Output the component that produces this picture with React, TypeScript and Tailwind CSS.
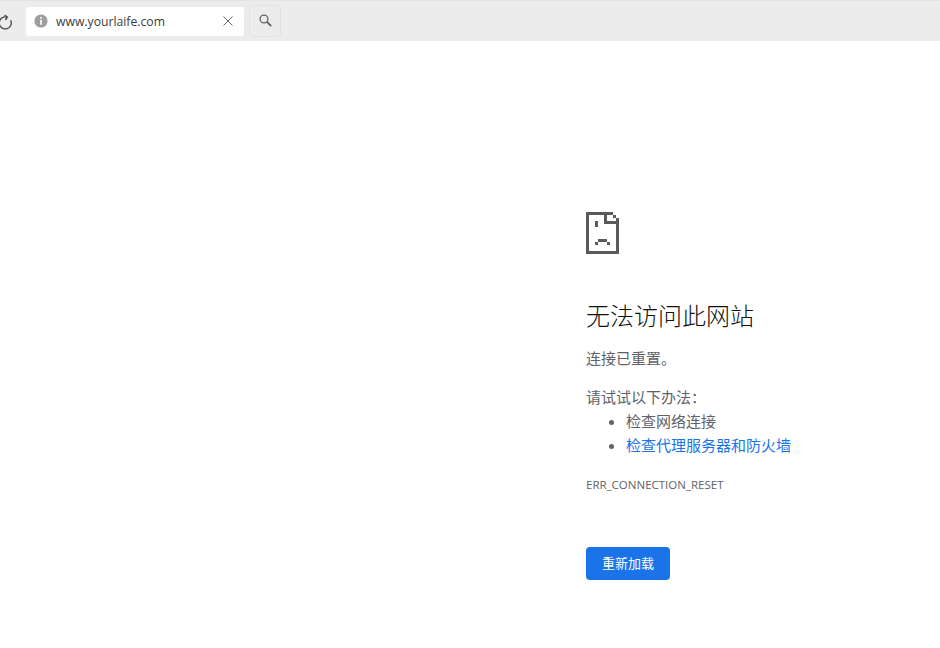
const cjk = "font-['Open_Sans','Noto_Sans_CJK_SC',sans-serif]";

function SadFile() {
  return (
    <svg width="33" height="42" viewBox="0 0 33 42" fill="#5a5a5a" shapeRendering="crispEdges">
      <rect x="0" y="0" width="3" height="42" />
      <rect x="0" y="39" width="33" height="3" />
      <rect x="30" y="6" width="3" height="36" />
      <rect x="0" y="0" width="27" height="3" />
      <rect x="27" y="3" width="3" height="3" />
      <rect x="18" y="0" width="3" height="12" />
      <rect x="18" y="9" width="15" height="3" />
      <rect x="9" y="9" width="3" height="6" />
      <rect x="9" y="30" width="3" height="3" />
      <rect x="12" y="27" width="9" height="3" />
      <rect x="21" y="30" width="3" height="3" />
    </svg>
  );
}

function ReloadIcon() {
  return (
    <svg width="16" height="16" viewBox="0 0 16 16" fill="none" stroke="#444" strokeWidth="1.3" className="ml-[-3px] mt-[2px] shrink-0">
      <path d="M13.6 6.2A6 6 0 1 1 10 3.2" />
      <path d="M7.6 1 10.4 3.2 8.4 6" />
    </svg>
  );
}

function InfoIcon() {
  return (
    <svg width="14" height="14" viewBox="0 0 14 14" className="shrink-0">
      <circle cx="7" cy="7" r="6.6" fill="#9e9e9e" />
      <rect x="6.2" y="3" width="1.6" height="1.6" fill="#fff" />
      <rect x="6.2" y="5.8" width="1.6" height="5" fill="#fff" />
    </svg>
  );
}

function CloseIcon() {
  return (
    <svg width="10" height="10" viewBox="0 0 10 10" stroke="#6a6a6a" strokeWidth="1" className="shrink-0">
      <path d="M.5.5l9 9M9.5.5l-9 9" />
    </svg>
  );
}

function SearchIcon() {
  return (
    <svg width="13" height="13" viewBox="0 0 13 13" fill="none" stroke="#636363" className="mb-[2px]">
      <circle cx="5" cy="5" r="3.9" strokeWidth="1.3" />
      <path d="M8 8l4.2 4.2" strokeWidth="1.8" />
    </svg>
  );
}

function Toolbar() {
  return (
    <div className="flex h-[41px] items-center bg-[#ececec] border-t border-[#e4e4e4]">
      <ReloadIcon />
      <div className="ml-[13px] flex h-[29px] w-[218px] items-center rounded-[3px] bg-white pl-[8px] pr-[11px]">
        <InfoIcon />
        <span className="ml-[8px] mt-[2px] flex-1 text-[12.2px] text-[#3c3c3c]">www.yourlaife.com</span>
        <CloseIcon />
      </div>
      <button className="ml-[5px] flex h-[32px] w-[32px] items-center justify-center rounded-[4px] border border-[#e2e2e2] bg-[#ececec]">
        <SearchIcon />
      </button>
    </div>
  );
}

export default function App() {
  return (
    <div className={`h-[648px] w-[940px] overflow-hidden bg-white ${cjk}`}>
      <Toolbar />
      <div className="pl-[586px] pt-[171px]">
        <SadFile />
        <h1 className="mt-[44px] text-[24px] leading-[36px] font-light text-[#111111]">无法访问此网站</h1>
        <p className="mt-[12px] text-[15px] leading-[24px] text-[#5f6368]">连接已重置。</p>
        <p className="mt-[15px] text-[15px] leading-[24px] text-[#5f6368]">请试试以下办法：</p>
        <ul className="list-disc pl-[40px] text-[15px] leading-[24px] text-[#5f6368]">
          <li>检查网络连接</li>
          <li>
            <a className="text-[#1a73e8]">检查代理服务器和防火墙</a>
          </li>
        </ul>
        <div className="mt-[19px] text-[11.5px] leading-[18px] text-[#5f6368]">ERR_CONNECTION_RESET</div>
        <button className="mt-[53px] flex h-[33px] w-[84px] items-center justify-center rounded-[4px] bg-[#1a73e8] text-[13px] font-normal text-white">
          重新加载
        </button>
      </div>
    </div>
  );
}
